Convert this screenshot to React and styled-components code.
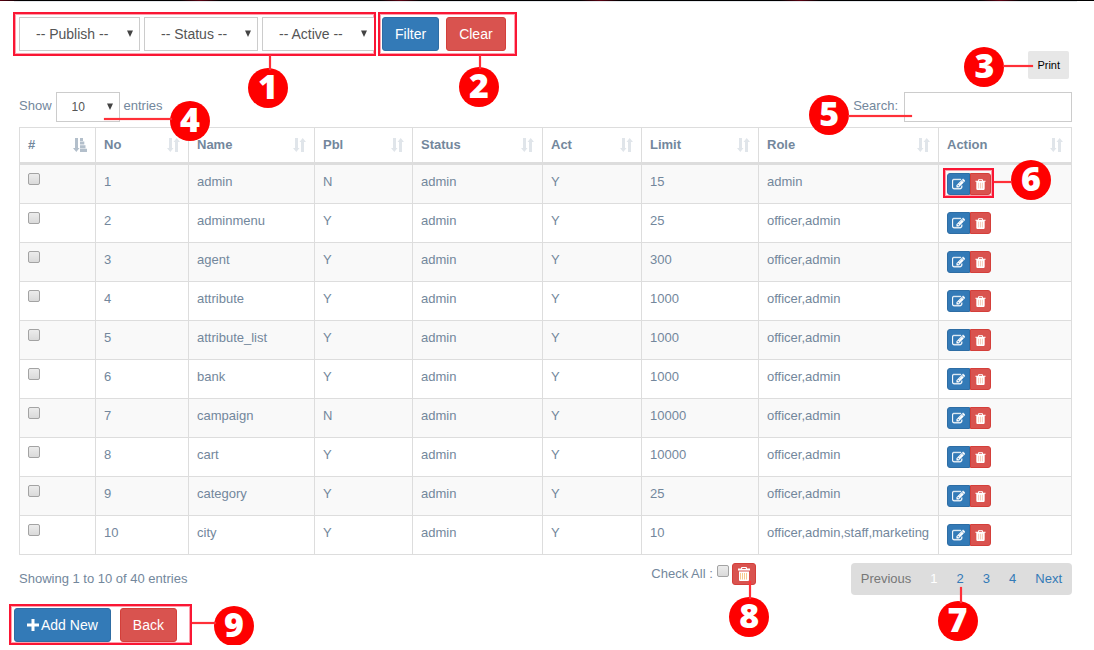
import React from "react";
import styled, { createGlobalStyle, css } from "styled-components";

const Global = createGlobalStyle`
  *, *::before, *::after { box-sizing: border-box; }
  body {
    margin: 0;
    background: #fff;
    color: #73879c;
    font: 13px/18px "Liberation Sans", Arial, sans-serif;
  }
  button, input, select { font-family: inherit; margin: 0; }
`;

const RED = "#fa1634";
const RED_EDGE = "rgba(250, 22, 52, 0.4)";

const TopStrip = styled.div`
  height: 1px;
  background: repeating-linear-gradient(90deg, #5c0010 0, #000 20px, #000 180px, #5c0010 200px);
`;

const TopRule = styled.div`
  height: 1px;
  margin: 0 17px 0 14px;
  background: #e6e9ed;
`;

const Page = styled.main`
  padding: 10px 22px 0 19px;
`;

const Toolbar = styled.div`
  display: flex;
  align-items: flex-start;
  gap: 2px;
  margin-left: -6px;
`;

const Frame = styled.div`
  position: relative;
  display: flex;
  gap: ${(p) => p.$gap || 4}px;
  padding: ${(p) => p.$pad};
  border: 2px solid ${RED};
  box-shadow: inset 0 0 0 1px ${RED_EDGE};
`;

const FooterFrame = styled(Frame)`
  width: max-content;
  margin: 9px 0 0 -10px;
`;

const Anchor = styled.div`
  position: relative;
  display: flex;
  align-items: center;
  gap: ${(p) => p.$gap || 0}px;
`;

const PrintAnchor = styled(Anchor)`
  margin: 39px 3px 0 auto;
`;

const SelectBox = styled.span`
  position: relative;
  display: inline-flex;
  width: ${(p) => p.$w}px;
  height: ${(p) => (p.$small ? 30 : 34)}px;
  svg {
    position: absolute;
    right: 7px;
    top: 50%;
    margin-top: -4px;
    pointer-events: none;
  }
  select {
    appearance: none;
    width: 100%;
    height: 100%;
    padding: 0 ${(p) => (p.$small ? 15 : 16)}px;
    border: 1px solid #ccc;
    ${(p) => p.$open && css`border-right: 0;`}
    border-radius: 0;
    background: #fff;
    color: #555;
    font-size: ${(p) => (p.$small ? 12 : 14)}px;
  }
`;

const Button = styled.button`
  display: inline-flex;
  align-items: center;
  justify-content: center;
  gap: 2px;
  height: 34px;
  padding: 0 12px;
  border: 1px solid ${(p) => (p.$danger ? "#d43f3a" : "#2e6da4")};
  border-radius: 3px;
  background: ${(p) => (p.$danger ? "#d9534f" : "#337ab7")};
  color: #fff;
  font-size: 14px;
  cursor: pointer;
`;

const IconButton = styled(Button)`
  width: ${(p) => p.$w}px;
  height: 22px;
  padding: 0;
  border-radius: ${(p) => p.$radius || "3px"};
`;

const PrintButton = styled.button`
  height: 28px;
  padding: 0 9px;
  border: 0;
  border-radius: 2px;
  background: #e7e7e7;
  color: #000;
  font-size: 11px;
  cursor: pointer;
`;

const Controls = styled.div`
  display: flex;
  justify-content: space-between;
  margin: 13px 0 5px;
`;

const FieldLabel = styled.label`
  display: flex;
  align-items: center;
  gap: ${(p) => p.$gap || 4}px;
`;

const Raised = styled.span`
  margin-bottom: 2px;
`;

const SearchInput = styled.input`
  width: 168px;
  height: 30px;
  padding: 4px 8px;
  border: 1px solid #ccc;
  background: #fff;
  color: #555;
  font-size: 12px;
`;

const Table = styled.table`
  width: 100%;
  table-layout: fixed;
  border-collapse: collapse;
  th, td {
    padding: 8px;
    border: 1px solid #ddd;
    text-align: left;
    vertical-align: top;
    white-space: nowrap;
  }
  td { height: 39px; }
  thead th { height: 36px; border-bottom-width: 3px; }
  tbody tr:nth-child(odd) { background: #f9f9f9; }
`;

const HeadCell = styled.div`
  display: flex;
  align-items: center;
  justify-content: space-between;
  height: 17px;
  svg { flex: none; color: ${(p) => (p.$active ? "#b3bfcb" : "#e0e5ea")}; }
`;

const Tick = styled.input`
  appearance: none;
  display: block;
  width: 12px;
  height: 12px;
  border: 1px solid #a3a3a3;
  border-radius: 2px;
  background: linear-gradient(#ececec, #dadada);
  &:checked { background: #337ab7; }
`;

const ActionGroup = styled.div`
  position: relative;
  display: inline-flex;
  vertical-align: top;
`;

const Highlight = styled.span`
  position: absolute;
  inset: -5px -3px -3px -4px;
  border: 2px solid ${RED};
  box-shadow: inset 0 0 0 1px ${RED_EDGE};
  pointer-events: none;
`;

const Bottom = styled.div`
  display: flex;
  align-items: flex-start;
  margin-top: 8px;
`;

const Info = styled.div`
  flex: 1;
  padding-top: 7px;
`;

const CheckAll = styled(Anchor)`
  align-items: flex-start;
  margin-right: 95px;
  ${FieldLabel} { align-items: flex-start; padding-top: 2px; }
`;

const Pager = styled.nav`
  display: flex;
  height: 32px;
  border-radius: 4px;
  background: #ddd;
`;

const PageLink = styled.a`
  position: relative;
  padding: 7px 10px;
  color: ${(p) => (p.$current ? "#fff" : p.$disabled ? "#777" : "#337ab7")};
  text-decoration: none;
  & + & { margin-left: -1px; }
`;

const Badge = styled.span`
  position: absolute;
  z-index: 2;
  left: ${(p) => p.$x}px;
  top: ${(p) => p.$y}px;
  width: 40px;
  height: 40px;
  border-radius: 50%;
  background: #fe0000;
  color: #fff;
  font: 800 34px/36px "Open Sans", Lato, sans-serif;
  text-align: center;
`;

const Lead = styled.span`
  position: absolute;
  z-index: 3;
  left: ${(p) => p.$x}px;
  top: ${(p) => p.$y}px;
  width: ${(p) => p.$w || 2}px;
  height: ${(p) => p.$h || 2}px;
  background: #ff3038;
  box-shadow: 0 0 1px #ff3038;
`;

function Callout({ n, at, lead }) {
  return (
    <>
      <Lead $x={lead[0]} $y={lead[1]} $w={lead[2]} $h={lead[3]} />
      <Badge $x={at[0]} $y={at[1]}>{n}</Badge>
    </>
  );
}

const Arrow = () => (
  <svg width="6" height="7" viewBox="0 0 6 7" aria-hidden="true">
    <path d="M0 0.500h6L3 7z" fill="#444" />
  </svg>
);

function Select({ label, options, ...box }) {
  return (
    <SelectBox {...box}>
      <select aria-label={label}>
        {options.map((o) => <option key={o}>{o}</option>)}
      </select>
      <Arrow />
    </SelectBox>
  );
}

const SortIcon = () => (
  <svg width="13" height="14" viewBox="0 0 13 14" fill="currentColor" aria-hidden="true">
    <path d="M2 0h3v10h1.500L3.300 14 0 10h2zM8 14V4H6.500L9.700 0 13 4h-2v10z" />
  </svg>
);

const SortedIcon = () => (
  <svg width="14" height="14" viewBox="0 0 14 14" fill="currentColor" aria-hidden="true">
    <path d="M2 0h3v10h1.500L3.300 14 0 10h2zM7 0h3v3H7zM7 3.600h4.300v3H7zM7 7.200h5.500v3H7zM7 10.800h7V14H7z" />
  </svg>
);

const EditIcon = () => (
  <svg width="13" height="13" viewBox="0 0 1792 1792" fill="currentColor" stroke="currentColor" strokeWidth="50" aria-hidden="true">
    <path d="M888 1184l116-116-152-152-116 116v56h96v96h56zm440-720q-16-16-33 1l-350 350q-17 17-1 33t33-1l350-350q17-17 1-33zm80 594v190q0 119-84.500 203.500t-203.500 84.500h-832q-119 0-203.500-84.500t-84.500-203.500v-832q0-119 84.500-203.500t203.500-84.500h832q63 0 117 25 15 7 18 23 3 17-9 29l-49 49q-14 14-32 8-23-6-45-6h-832q-66 0-113 47t-47 113v832q0 66 47 113t113 47h832q66 0 113-47t47-113v-126q0-13 9-22l64-64q15-15 35-7t20 29zm-96-738l288 288-672 672h-288v-288zm444 132l-92 92-288-288 92-92q28-28 68-28t68 28l152 152q28 28 28 68t-28 68z" />
  </svg>
);

const TrashIcon = () => (
  <svg width="13" height="13" viewBox="0 0 1792 1792" fill="currentColor" aria-hidden="true">
    <path fill="#f6cbb8" d="M500 560h800v900h-800z" />
    <path d="M704 1376v-704q0-14-9-23t-23-9h-64q-14 0-23 9t-9 23v704q0 14 9 23t23 9h64q14 0 23-9t9-23zm256 0v-704q0-14-9-23t-23-9h-64q-14 0-23 9t-9 23v704q0 14 9 23t23 9h64q14 0 23-9t9-23zm256 0v-704q0-14-9-23t-23-9h-64q-14 0-23 9t-9 23v704q0 14 9 23t23 9h64q14 0 23-9t9-23zm-544-992h448l-48-117q-7-9-17-11h-317q-10 2-17 11zm928 32v64q0 14-9 23t-23 9h-96v948q0 83-47 143.500t-113 60.500h-832q-66 0-113-58.500t-47-141.500v-952h-96q-14 0-23-9t-9-23v-64q0-14 9-23t23-9h309l70-167q15-37 54-63t79-26h320q40 0 79 26t54 63l70 167h309q14 0 23 9t9 23z" />
  </svg>
);

const BinIcon = () => (
  <svg width="12" height="14" viewBox="0 0 12 14" aria-hidden="true">
    <path d="M0 1.500h3V1q0-1 1-1h4q1 0 1 1v.500h3V3.500H0zM4.200 1v1h3.600V1z" fill="#fff" fillRule="evenodd" />
    <path d="M1 4.500h10V13q0 1-1 1H2q-1 0-1-1z" fill="#fff" />
    <path d="M2.500 6v6.500M4.500 6v6.500M6.500 6v6.500M8.500 6v6.500" stroke="#f8c98f" />
  </svg>
);

const PlusIcon = () => (
  <svg width="12" height="12" viewBox="0 0 12 12" fill="currentColor" aria-hidden="true">
    <path d="M4.500 0h3v4.500H12v3H7.500V12h-3V7.500H0v-3h4.500z" />
  </svg>
);

const COLUMNS = [
  ["#", 76], ["No", 93], ["Name", 126], ["Pbl", 98], ["Status", 130],
  ["Act", 99], ["Limit", 117], ["Role", 180], ["Action", null],
];

const ROWS = [
  ["admin", "N", 15, "admin"],
  ["adminmenu", "Y", 25, "officer,admin"],
  ["agent", "Y", 300, "officer,admin"],
  ["attribute", "Y", 1000, "officer,admin"],
  ["attribute_list", "Y", 1000, "officer,admin"],
  ["bank", "Y", 1000, "officer,admin"],
  ["campaign", "N", 10000, "officer,admin"],
  ["cart", "Y", 10000, "officer,admin"],
  ["category", "Y", 25, "officer,admin"],
  ["city", "Y", 10, "officer,admin,staff,marketing"],
];

function RowActions({ name, marked }) {
  return (
    <ActionGroup>
      <IconButton $w={23} $radius="3px 0 0 3px" aria-label={`Edit ${name}`}><EditIcon /></IconButton>
      <IconButton $w={21} $radius="0 3px 3px 0" $danger aria-label={`Delete ${name}`}><TrashIcon /></IconButton>
      {marked && (
        <>
          <Highlight />
          <Callout n={6} at={[64, -13]} lead={[47, 8, 18, 2]} />
        </>
      )}
    </ActionGroup>
  );
}

export default function App() {
  return (
    <>
      <Global />
      <TopStrip />
      <TopRule />
      <Page>
        <Toolbar>
          <Frame $pad="3px 0 3px 4px">
            <Select label="Publish" options={["-- Publish --"]} $w={121} />
            <Select label="Status" options={["-- Status --"]} $w={114} />
            <Select label="Active" options={["-- Active --"]} $w={112} $open />
            <Callout n={1} at={[233, 54]} lead={[254, 41, 2, 15]} />
          </Frame>
          <Frame $pad="3px 9px 3px 2px" $gap={7}>
            <Button>Filter</Button>
            <Button $danger>Clear</Button>
            <Callout n={2} at={[79, 53]} lead={[99, 41, 2, 14]} />
          </Frame>
          <PrintAnchor>
            <PrintButton>Print</PrintButton>
            <Callout n={3} at={[-64, -4]} lead={[-25, 14, 30, 2]} />
          </PrintAnchor>
        </Toolbar>

        <Controls>
          <Anchor>
            <FieldLabel>
              <Raised>Show</Raised>
              <Select label="Entries per page" options={["10"]} $w={64} $small />
              <Raised>entries</Raised>
            </FieldLabel>
            <Callout n={4} at={[151, 9]} lead={[85, 26, 68, 2]} />
          </Anchor>
          <Anchor>
            <FieldLabel $gap={6}>
              <Raised>Search:</Raised>
              <SearchInput type="search" />
            </FieldLabel>
            <Callout n={5} at={[-44, 3]} lead={[-5, 23, 64, 2]} />
          </Anchor>
        </Controls>

        <Table>
          <colgroup>
            {COLUMNS.map(([name, w]) => <col key={name} width={w || undefined} />)}
          </colgroup>
          <thead>
            <tr>
              {COLUMNS.map(([name], i) => (
                <th key={name} scope="col">
                  <HeadCell $active={i === 0}>
                    {name}
                    {i === 0 ? <SortedIcon /> : <SortIcon />}
                  </HeadCell>
                </th>
              ))}
            </tr>
          </thead>
          <tbody>
            {ROWS.map(([name, pbl, limit, role], i) => (
              <tr key={name}>
                <td><Tick type="checkbox" aria-label={`Select ${name}`} /></td>
                <td>{i + 1}</td>
                <td>{name}</td>
                <td>{pbl}</td>
                <td>admin</td>
                <td>Y</td>
                <td>{limit}</td>
                <td>{role}</td>
                <td><RowActions name={name} marked={i === 0} /></td>
              </tr>
            ))}
          </tbody>
        </Table>

        <Bottom>
          <Info>Showing 1 to 10 of 40 entries</Info>
          <CheckAll $gap={3}>
            <FieldLabel>Check All : <Tick type="checkbox" /></FieldLabel>
            <IconButton $w={24} $danger aria-label="Delete checked"><BinIcon /></IconButton>
            <Callout n={8} at={[78, 34]} lead={[98, 18, 2, 18]} />
          </CheckAll>
          <Pager aria-label="Pages">
            <PageLink href="#" $disabled>Previous</PageLink>
            <PageLink href="#1" $current>1</PageLink>
            <PageLink href="#2">
              2
              <Callout n={7} at={[-9, 38]} lead={[13, 24, 2, 16]} />
            </PageLink>
            <PageLink href="#3">3</PageLink>
            <PageLink href="#4">4</PageLink>
            <PageLink href="#next">Next</PageLink>
          </Pager>
        </Bottom>

        <FooterFrame $pad="2px 13px 1px 3px" $gap={9}>
          <Button><PlusIcon />Add New</Button>
          <Button $danger>Back</Button>
          <Callout n={9} at={[203, 0]} lead={[181, 16, 24, 2]} />
        </FooterFrame>
      </Page>
    </>
  );
}
